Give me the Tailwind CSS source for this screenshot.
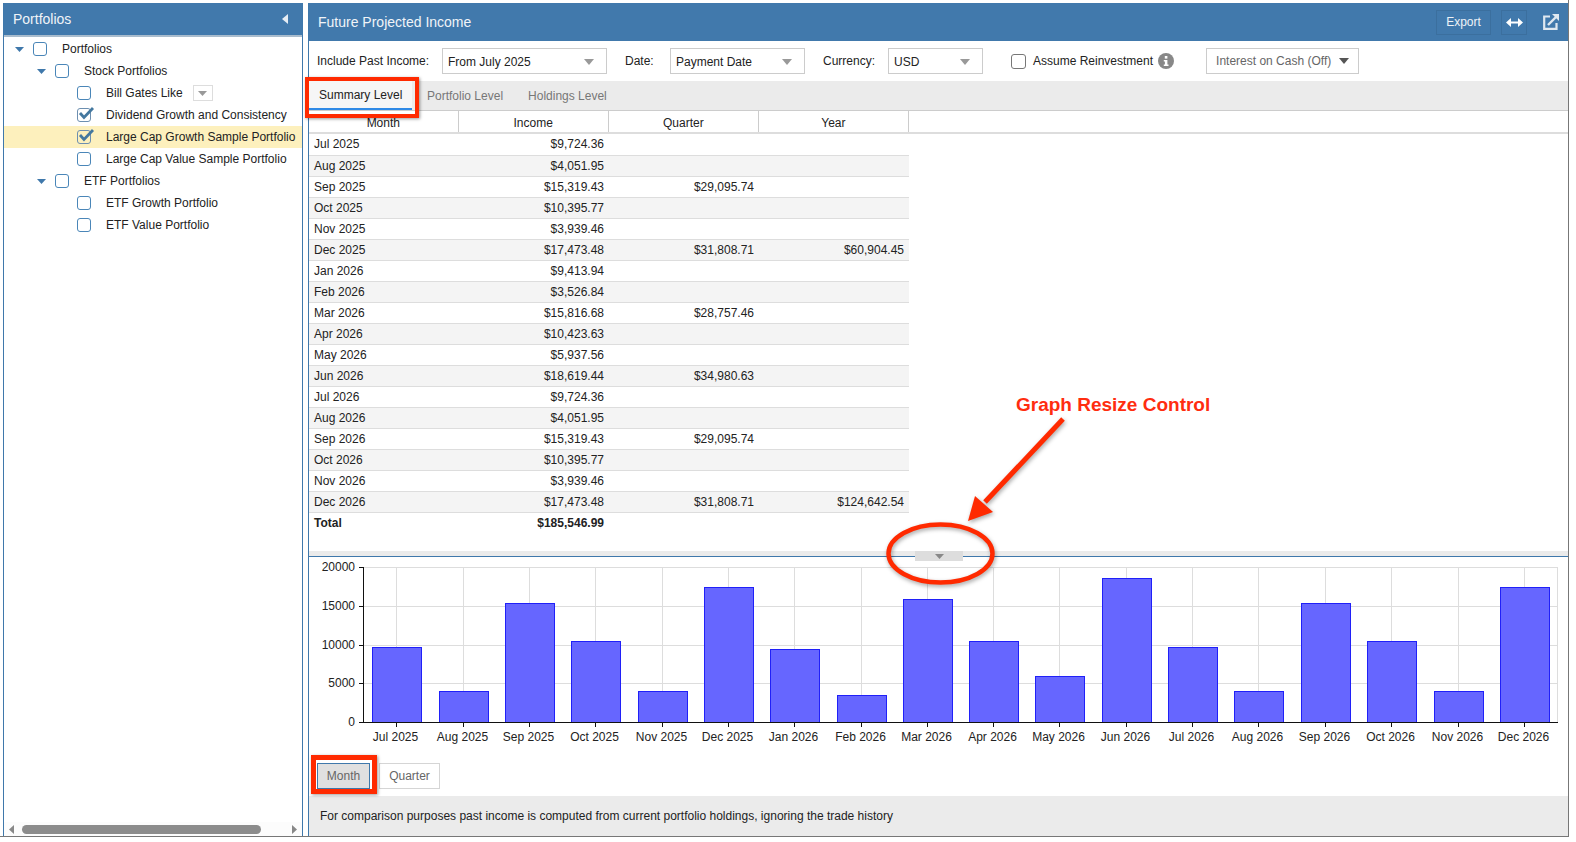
<!DOCTYPE html>
<html lang="en">
<head>
<meta charset="UTF-8">
<title>Future Projected Income</title>
<script src="https://cdn.jsdelivr.net/npm/@tailwindcss/browser@4"></script>
</head>
<body class="bg-white font-['Liberation_Sans',Arial,sans-serif] text-xs text-[#222]">
<div class="relative w-[1576px] h-[842px] overflow-hidden">
  <div class="flex gap-[5px] w-[1569px] h-[837px] pt-[3px] pl-[3px] border-r border-b border-[#777]">

    <!-- Portfolio tree -->
    <aside class="flex flex-col w-[300px] border-x border-[#3f78ab]">
      <div class="flex items-center justify-between h-[34px] pl-[9px] pr-[14px] bg-[#4179ac] border-b-2 border-[#a9bccd] text-sm text-[#f0f4f8]">
        <span>Portfolios</span>
        <svg class="w-[6px] h-[10px]" viewBox="0 0 6 10"><path d="M6 0V10L0 5Z" fill="#e6edf4"/></svg>
      </div>
      <div class="flex-1 pt-[1px]">
        <div class="flex items-center h-[22px] pl-[11px]">
          <svg class="w-[9px] h-[5px] mr-[9px]" viewBox="0 0 9 5"><path d="M0 0H9L4.500 5Z" fill="#3f78ab"/></svg>
          <span class="w-[14px] h-[14px] mr-[15px] rounded-[3px] border border-[#4a86b8]"></span>Portfolios
        </div>
        <div class="flex items-center h-[22px] pl-[33px]">
          <svg class="w-[9px] h-[5px] mr-[9px]" viewBox="0 0 9 5"><path d="M0 0H9L4.500 5Z" fill="#3f78ab"/></svg>
          <span class="w-[14px] h-[14px] mr-[15px] rounded-[3px] border border-[#4a86b8]"></span>Stock Portfolios
        </div>
        <div class="flex items-center h-[22px] pl-[73px]">
          <span class="w-[14px] h-[14px] mr-[15px] rounded-[3px] border border-[#4a86b8]"></span>Bill Gates Like
          <span class="flex items-center justify-center w-[20px] h-[16px] ml-[10px] border border-[#ddd]">
            <svg class="w-[9px] h-[5px]" viewBox="0 0 9 5"><path d="M0 0H9L4.500 5Z" fill="#999"/></svg>
          </span>
        </div>
        <div class="flex items-center h-[22px] pl-[73px]">
          <span class="relative w-[14px] h-[14px] mr-[15px] rounded-[3px] border border-[#6d8fb0]">
            <svg class="absolute left-0 top-[-3px] w-[18px] h-[16px]" viewBox="0 0 18 16"><path d="M2 7L6 11.500L15 2" fill="none" stroke="#44789f" stroke-width="2.800"/></svg>
          </span>Dividend Growth and Consistency
        </div>
        <div class="flex items-center h-[22px] pl-[73px] bg-[#fdf0bd]">
          <span class="relative w-[14px] h-[14px] mr-[15px] rounded-[3px] border border-[#6d8fb0]">
            <svg class="absolute left-0 top-[-3px] w-[18px] h-[16px]" viewBox="0 0 18 16"><path d="M2 7L6 11.500L15 2" fill="none" stroke="#44789f" stroke-width="2.800"/></svg>
          </span>Large Cap Growth Sample Portfolio
        </div>
        <div class="flex items-center h-[22px] pl-[73px]">
          <span class="w-[14px] h-[14px] mr-[15px] rounded-[3px] border border-[#4a86b8]"></span>Large Cap Value Sample Portfolio
        </div>
        <div class="flex items-center h-[22px] pl-[33px]">
          <svg class="w-[9px] h-[5px] mr-[9px]" viewBox="0 0 9 5"><path d="M0 0H9L4.500 5Z" fill="#3f78ab"/></svg>
          <span class="w-[14px] h-[14px] mr-[15px] rounded-[3px] border border-[#4a86b8]"></span>ETF Portfolios
        </div>
        <div class="flex items-center h-[22px] pl-[73px]">
          <span class="w-[14px] h-[14px] mr-[15px] rounded-[3px] border border-[#4a86b8]"></span>ETF Growth Portfolio
        </div>
        <div class="flex items-center h-[22px] pl-[73px]">
          <span class="w-[14px] h-[14px] mr-[15px] rounded-[3px] border border-[#4a86b8]"></span>ETF Value Portfolio
        </div>
      </div>
      <!-- horizontal scrollbar -->
      <div class="flex items-center h-[14px] pl-[5px] pr-[5px] bg-[#fcfcfc]">
        <svg class="w-[5px] h-[9px]" viewBox="0 0 5 9"><path d="M5 0V9L0 4.500Z" fill="#888"/></svg>
        <span class="w-[239px] h-[9px] ml-[8px] rounded-full bg-[#8c8c8c]"></span>
        <svg class="w-[5px] h-[9px] ml-auto" viewBox="0 0 5 9"><path d="M0 0V9L5 4.500Z" fill="#888"/></svg>
      </div>
    </aside>

    <!-- Income panel -->
    <main class="flex flex-col flex-1 min-w-0 border-l border-[#3f78ab]">
      <header class="flex items-center h-[38px] pl-[9px] pr-[9px] bg-[#4179ac] text-sm text-[#f0f4f8]">
        <span>Future Projected Income</span>
        <button class="flex items-center justify-center w-[55px] h-[25px] ml-auto border border-[#3b6f9e] text-xs text-[#eef3f7]">Export</button>
        <button class="flex items-center justify-center w-[26px] h-[25px] ml-[10px] border border-[#3b6f9e]">
          <svg class="w-[17px] h-[9px]" viewBox="0 0 17 9"><path d="M3 4.500H14" stroke="#fff" stroke-width="2"/><path d="M5 0V9L0 4.500ZM12 0V9L17 4.500Z" fill="#fff"/></svg>
        </button>
        <button class="flex items-center justify-center w-[16px] h-[16px] ml-[16px]">
          <svg class="w-[16px] h-[16px]" viewBox="0 0 16 16" fill="none"><path d="M7 2.500H1.200V14.800H13.500V9" stroke="#dfe8f0" stroke-width="2.200"/><path d="M5 11L13 3" stroke="#dfe8f0" stroke-width="2.400"/><path d="M9 0H16V7Z" fill="#dfe8f0"/></svg>
        </button>
      </header>

      <div class="flex items-center h-[40px] pl-[8px]">
        <span class="w-[125px]">Include Past Income:</span>
        <div class="flex items-center justify-between w-[165px] h-[26px] pl-[5px] pr-[12px] pt-[1px] border border-[#ccc]">From July 2025
          <svg class="w-[10px] h-[6px]" viewBox="0 0 10 6"><path d="M0 0H10L5 6Z" fill="#999"/></svg>
        </div>
        <span class="ml-[18px] w-[45px]">Date:</span>
        <div class="flex items-center justify-between w-[135px] h-[26px] pl-[5px] pr-[12px] pt-[1px] border border-[#ccc]">Payment Date
          <svg class="w-[10px] h-[6px]" viewBox="0 0 10 6"><path d="M0 0H10L5 6Z" fill="#999"/></svg>
        </div>
        <span class="ml-[18px] w-[65px]">Currency:</span>
        <div class="flex items-center justify-between w-[95px] h-[26px] pl-[5px] pr-[12px] pt-[1px] border border-[#ccc]">USD
          <svg class="w-[10px] h-[6px]" viewBox="0 0 10 6"><path d="M0 0H10L5 6Z" fill="#999"/></svg>
        </div>
        <span class="w-[15px] h-[15px] ml-[28px] rounded-[3px] border border-[#777]"></span>
        <span class="ml-[7px]">Assume Reinvestment</span>
        <svg class="w-[16px] h-[16px] ml-[5px]" viewBox="0 0 16 16"><circle cx="8" cy="8" r="8" fill="#888"/><rect x="6.800" y="3" width="2.600" height="2.600" fill="#fff"/><path d="M5.800 7H9.400V11.500H10.500V13H5.800V11.500H6.900V8.500H5.800Z" fill="#fff"/></svg>
        <div class="flex items-center justify-between w-[153px] h-[26px] ml-[32px] pl-[9px] pr-[9px] border border-[#ccc] text-[#666]">Interest on Cash (Off)
          <svg class="w-[10px] h-[6px]" viewBox="0 0 10 6"><path d="M0 0H10L5 6Z" fill="#555"/></svg>
        </div>
      </div>

      <div class="flex items-stretch h-[30px] bg-[#ebebeb] border-b border-[#ccc] text-[#777]">
        <span class="flex items-center w-[103px] h-[29px] pl-[10px] bg-[#f6f6f6] border-b-2 border-[#2f8ae6] text-[#222]">Summary Level</span>
        <span class="flex items-center ml-[15px]">Portfolio Level</span>
        <span class="flex items-center ml-[25px]">Holdings Level</span>
      </div>

      <div class="flex-1 min-h-0">
        <div class="border-b-2 border-[#ddd]">
          <table class="w-[600px] table-fixed border-collapse">
            <thead>
              <tr class="h-[21px] font-normal">
                <th class="w-[149px] pt-[2px] font-normal border-r border-[#ccc]">Month</th>
                <th class="w-[150px] pt-[2px] font-normal border-r border-[#ccc]">Income</th>
                <th class="w-[150px] pt-[2px] font-normal border-r border-[#ccc]">Quarter</th>
                <th class="w-[150px] pt-[2px] font-normal border-r border-[#ccc]">Year</th>
              </tr>
            </thead>
          </table>
        </div>
        <table class="w-[600px] table-fixed border-collapse text-right">
          <tbody>
            <tr class="h-[21px] border-b border-[#ddd]"><td class="pl-[5px] text-left">Jul 2025</td><td class="pr-[5px]">$9,724.36</td><td class="pr-[5px]"></td><td class="pr-[5px]"></td></tr>
            <tr class="h-[21px] border-b border-[#ddd] bg-[#f4f4f4]"><td class="pl-[5px] text-left">Aug 2025</td><td class="pr-[5px]">$4,051.95</td><td class="pr-[5px]"></td><td class="pr-[5px]"></td></tr>
            <tr class="h-[21px] border-b border-[#ddd]"><td class="pl-[5px] text-left">Sep 2025</td><td class="pr-[5px]">$15,319.43</td><td class="pr-[5px]">$29,095.74</td><td class="pr-[5px]"></td></tr>
            <tr class="h-[21px] border-b border-[#ddd] bg-[#f4f4f4]"><td class="pl-[5px] text-left">Oct 2025</td><td class="pr-[5px]">$10,395.77</td><td class="pr-[5px]"></td><td class="pr-[5px]"></td></tr>
            <tr class="h-[21px] border-b border-[#ddd]"><td class="pl-[5px] text-left">Nov 2025</td><td class="pr-[5px]">$3,939.46</td><td class="pr-[5px]"></td><td class="pr-[5px]"></td></tr>
            <tr class="h-[21px] border-b border-[#ddd] bg-[#f4f4f4]"><td class="pl-[5px] text-left">Dec 2025</td><td class="pr-[5px]">$17,473.48</td><td class="pr-[5px]">$31,808.71</td><td class="pr-[5px]">$60,904.45</td></tr>
            <tr class="h-[21px] border-b border-[#ddd]"><td class="pl-[5px] text-left">Jan 2026</td><td class="pr-[5px]">$9,413.94</td><td class="pr-[5px]"></td><td class="pr-[5px]"></td></tr>
            <tr class="h-[21px] border-b border-[#ddd] bg-[#f4f4f4]"><td class="pl-[5px] text-left">Feb 2026</td><td class="pr-[5px]">$3,526.84</td><td class="pr-[5px]"></td><td class="pr-[5px]"></td></tr>
            <tr class="h-[21px] border-b border-[#ddd]"><td class="pl-[5px] text-left">Mar 2026</td><td class="pr-[5px]">$15,816.68</td><td class="pr-[5px]">$28,757.46</td><td class="pr-[5px]"></td></tr>
            <tr class="h-[21px] border-b border-[#ddd] bg-[#f4f4f4]"><td class="pl-[5px] text-left">Apr 2026</td><td class="pr-[5px]">$10,423.63</td><td class="pr-[5px]"></td><td class="pr-[5px]"></td></tr>
            <tr class="h-[21px] border-b border-[#ddd]"><td class="pl-[5px] text-left">May 2026</td><td class="pr-[5px]">$5,937.56</td><td class="pr-[5px]"></td><td class="pr-[5px]"></td></tr>
            <tr class="h-[21px] border-b border-[#ddd] bg-[#f4f4f4]"><td class="pl-[5px] text-left">Jun 2026</td><td class="pr-[5px]">$18,619.44</td><td class="pr-[5px]">$34,980.63</td><td class="pr-[5px]"></td></tr>
            <tr class="h-[21px] border-b border-[#ddd]"><td class="pl-[5px] text-left">Jul 2026</td><td class="pr-[5px]">$9,724.36</td><td class="pr-[5px]"></td><td class="pr-[5px]"></td></tr>
            <tr class="h-[21px] border-b border-[#ddd] bg-[#f4f4f4]"><td class="pl-[5px] text-left">Aug 2026</td><td class="pr-[5px]">$4,051.95</td><td class="pr-[5px]"></td><td class="pr-[5px]"></td></tr>
            <tr class="h-[21px] border-b border-[#ddd]"><td class="pl-[5px] text-left">Sep 2026</td><td class="pr-[5px]">$15,319.43</td><td class="pr-[5px]">$29,095.74</td><td class="pr-[5px]"></td></tr>
            <tr class="h-[21px] border-b border-[#ddd] bg-[#f4f4f4]"><td class="pl-[5px] text-left">Oct 2026</td><td class="pr-[5px]">$10,395.77</td><td class="pr-[5px]"></td><td class="pr-[5px]"></td></tr>
            <tr class="h-[21px] border-b border-[#ddd]"><td class="pl-[5px] text-left">Nov 2026</td><td class="pr-[5px]">$3,939.46</td><td class="pr-[5px]"></td><td class="pr-[5px]"></td></tr>
            <tr class="h-[21px] border-b border-[#ddd] bg-[#f4f4f4]"><td class="pl-[5px] text-left">Dec 2026</td><td class="pr-[5px]">$17,473.48</td><td class="pr-[5px]">$31,808.71</td><td class="pr-[5px]">$124,642.54</td></tr>
            <tr class="h-[21px] font-bold"><td class="pl-[5px] text-left">Total</td><td class="pr-[5px]">$185,546.99</td><td class="pr-[5px]"></td><td class="pr-[5px]"></td></tr>
          </tbody>
        </table>
      </div>

      <!-- resize splitter -->
      <div class="relative h-[6px] bg-[#ebebeb] border-b border-[#3f78ab]">
        <div class="absolute left-[606px] top-0 flex items-center justify-center w-[48px] h-[10px] bg-[#ddd]">
          <svg class="w-[9px] h-[5px]" viewBox="0 0 9 5"><path d="M0 0H9L4.500 5Z" fill="#888"/></svg>
        </div>
      </div>

      <svg class="w-[1259px] h-[200px]" viewBox="0 0 1259 200" font-size="12" fill="#222">
        <g stroke="#ddd">
          <line x1="50" y1="10.500" x2="1249" y2="10.500"/>
          <line x1="50" y1="49.500" x2="1249" y2="49.500"/>
          <line x1="50" y1="88.500" x2="1249" y2="88.500"/>
          <line x1="50" y1="126.500" x2="1249" y2="126.500"/>
          <line x1="1248.500" y1="10" x2="1248.500" y2="165"/>
        </g>
        <g text-anchor="end">
          <text x="46" y="14">20000</text>
          <text x="46" y="53">15000</text>
          <text x="46" y="92">10000</text>
          <text x="46" y="130">5000</text>
          <text x="46" y="169">0</text>
        </g>
        <g text-anchor="middle">
          <g transform="translate(87 0)"><line x1="0.500" x2="0.500" y1="10" y2="165" stroke="#ddd"/><rect x="-23.500" y="90.500" width="49" height="75" fill="#6666ff" stroke="#2020f8"/><line x1="0.500" x2="0.500" y1="165" y2="170" stroke="#111"/><text x="-0.500" y="184">Jul 2025</text></g>
          <g transform="translate(154 0)"><line x1="0.500" x2="0.500" y1="10" y2="165" stroke="#ddd"/><rect x="-23.500" y="134.500" width="49" height="31" fill="#6666ff" stroke="#2020f8"/><line x1="0.500" x2="0.500" y1="165" y2="170" stroke="#111"/><text x="-0.500" y="184">Aug 2025</text></g>
          <g transform="translate(220 0)"><line x1="0.500" x2="0.500" y1="10" y2="165" stroke="#ddd"/><rect x="-23.500" y="46.500" width="49" height="119" fill="#6666ff" stroke="#2020f8"/><line x1="0.500" x2="0.500" y1="165" y2="170" stroke="#111"/><text x="-0.500" y="184">Sep 2025</text></g>
          <g transform="translate(286 0)"><line x1="0.500" x2="0.500" y1="10" y2="165" stroke="#ddd"/><rect x="-23.500" y="84.500" width="49" height="81" fill="#6666ff" stroke="#2020f8"/><line x1="0.500" x2="0.500" y1="165" y2="170" stroke="#111"/><text x="-0.500" y="184">Oct 2025</text></g>
          <g transform="translate(353 0)"><line x1="0.500" x2="0.500" y1="10" y2="165" stroke="#ddd"/><rect x="-23.500" y="134.500" width="49" height="31" fill="#6666ff" stroke="#2020f8"/><line x1="0.500" x2="0.500" y1="165" y2="170" stroke="#111"/><text x="-0.500" y="184">Nov 2025</text></g>
          <g transform="translate(419 0)"><line x1="0.500" x2="0.500" y1="10" y2="165" stroke="#ddd"/><rect x="-23.500" y="30.500" width="49" height="135" fill="#6666ff" stroke="#2020f8"/><line x1="0.500" x2="0.500" y1="165" y2="170" stroke="#111"/><text x="-0.500" y="184">Dec 2025</text></g>
          <g transform="translate(485 0)"><line x1="0.500" x2="0.500" y1="10" y2="165" stroke="#ddd"/><rect x="-23.500" y="92.500" width="49" height="73" fill="#6666ff" stroke="#2020f8"/><line x1="0.500" x2="0.500" y1="165" y2="170" stroke="#111"/><text x="-0.500" y="184">Jan 2026</text></g>
          <g transform="translate(552 0)"><line x1="0.500" x2="0.500" y1="10" y2="165" stroke="#ddd"/><rect x="-23.500" y="138.500" width="49" height="27" fill="#6666ff" stroke="#2020f8"/><line x1="0.500" x2="0.500" y1="165" y2="170" stroke="#111"/><text x="-0.500" y="184">Feb 2026</text></g>
          <g transform="translate(618 0)"><line x1="0.500" x2="0.500" y1="10" y2="165" stroke="#ddd"/><rect x="-23.500" y="42.500" width="49" height="123" fill="#6666ff" stroke="#2020f8"/><line x1="0.500" x2="0.500" y1="165" y2="170" stroke="#111"/><text x="-0.500" y="184">Mar 2026</text></g>
          <g transform="translate(684 0)"><line x1="0.500" x2="0.500" y1="10" y2="165" stroke="#ddd"/><rect x="-23.500" y="84.500" width="49" height="81" fill="#6666ff" stroke="#2020f8"/><line x1="0.500" x2="0.500" y1="165" y2="170" stroke="#111"/><text x="-0.500" y="184">Apr 2026</text></g>
          <g transform="translate(750 0)"><line x1="0.500" x2="0.500" y1="10" y2="165" stroke="#ddd"/><rect x="-23.500" y="119.500" width="49" height="46" fill="#6666ff" stroke="#2020f8"/><line x1="0.500" x2="0.500" y1="165" y2="170" stroke="#111"/><text x="-0.500" y="184">May 2026</text></g>
          <g transform="translate(817 0)"><line x1="0.500" x2="0.500" y1="10" y2="165" stroke="#ddd"/><rect x="-23.500" y="21.500" width="49" height="144" fill="#6666ff" stroke="#2020f8"/><line x1="0.500" x2="0.500" y1="165" y2="170" stroke="#111"/><text x="-0.500" y="184">Jun 2026</text></g>
          <g transform="translate(883 0)"><line x1="0.500" x2="0.500" y1="10" y2="165" stroke="#ddd"/><rect x="-23.500" y="90.500" width="49" height="75" fill="#6666ff" stroke="#2020f8"/><line x1="0.500" x2="0.500" y1="165" y2="170" stroke="#111"/><text x="-0.500" y="184">Jul 2026</text></g>
          <g transform="translate(949 0)"><line x1="0.500" x2="0.500" y1="10" y2="165" stroke="#ddd"/><rect x="-23.500" y="134.500" width="49" height="31" fill="#6666ff" stroke="#2020f8"/><line x1="0.500" x2="0.500" y1="165" y2="170" stroke="#111"/><text x="-0.500" y="184">Aug 2026</text></g>
          <g transform="translate(1016 0)"><line x1="0.500" x2="0.500" y1="10" y2="165" stroke="#ddd"/><rect x="-23.500" y="46.500" width="49" height="119" fill="#6666ff" stroke="#2020f8"/><line x1="0.500" x2="0.500" y1="165" y2="170" stroke="#111"/><text x="-0.500" y="184">Sep 2026</text></g>
          <g transform="translate(1082 0)"><line x1="0.500" x2="0.500" y1="10" y2="165" stroke="#ddd"/><rect x="-23.500" y="84.500" width="49" height="81" fill="#6666ff" stroke="#2020f8"/><line x1="0.500" x2="0.500" y1="165" y2="170" stroke="#111"/><text x="-0.500" y="184">Oct 2026</text></g>
          <g transform="translate(1149 0)"><line x1="0.500" x2="0.500" y1="10" y2="165" stroke="#ddd"/><rect x="-23.500" y="134.500" width="49" height="31" fill="#6666ff" stroke="#2020f8"/><line x1="0.500" x2="0.500" y1="165" y2="170" stroke="#111"/><text x="-0.500" y="184">Nov 2026</text></g>
          <g transform="translate(1215 0)"><line x1="0.500" x2="0.500" y1="10" y2="165" stroke="#ddd"/><rect x="-23.500" y="30.500" width="49" height="135" fill="#6666ff" stroke="#2020f8"/><line x1="0.500" x2="0.500" y1="165" y2="170" stroke="#111"/><text x="-0.500" y="184">Dec 2026</text></g>
        </g>
        <line x1="50" y1="165.500" x2="1249" y2="165.500" stroke="#111"/>
        <line x1="54.500" y1="10" x2="54.500" y2="166" stroke="#111"/>
        <line x1="50" y1="10.500" x2="54" y2="10.500" stroke="#111"/>
        <line x1="50" y1="49.500" x2="54" y2="49.500" stroke="#111"/>
        <line x1="50" y1="88.500" x2="54" y2="88.500" stroke="#111"/>
        <line x1="50" y1="126.500" x2="54" y2="126.500" stroke="#111"/>
      </svg>

      <div class="flex items-start h-[39px] pt-[6px] pl-[8px] gap-[9px] text-[#666]">
        <button class="w-[53px] h-[26px] bg-[#e0e0e0] border border-[#3f78ab]">Month</button>
        <button class="w-[61px] h-[26px] border border-[#d5d5d5]">Quarter</button>
      </div>
      <div class="flex items-center h-[40px] pl-[11px] bg-[#ebebeb]">For comparison purposes past income is computed from current portfolio holdings, ignoring the trade history</div>
    </main>
  </div>

  <!-- red annotations over the screenshot -->
  <div class="absolute left-[305px] top-[77px] w-[114px] h-[41px] border-4 border-[#ff2a00] shadow-[1px_1px_3px_rgba(0,0,0,0.4)]"></div>
  <div class="absolute left-[311px] top-[755px] w-[66px] h-[39px] border-[5px] border-[#ff2a00] shadow-[1px_1px_3px_rgba(0,0,0,0.4)]"></div>
  <div class="absolute left-[1016px] top-[392px] text-[19px] font-bold text-[#ff2d0f] whitespace-nowrap">Graph Resize Control</div>
  <svg class="absolute left-[880px] top-[410px] w-[200px] h-[180px] drop-shadow-[1px_2px_2px_rgba(0,0,0,0.35)]" viewBox="0 0 200 180" fill="none">
    <ellipse cx="60.500" cy="143.500" rx="52" ry="29" stroke="#ff2a00" stroke-width="4.500"/>
    <path d="M183 9L105 92" stroke="#ff2a00" stroke-width="5"/>
    <path d="M88 111L95 86L113 102Z" fill="#ff2a00"/>
  </svg>
</div>
</body>
</html>
